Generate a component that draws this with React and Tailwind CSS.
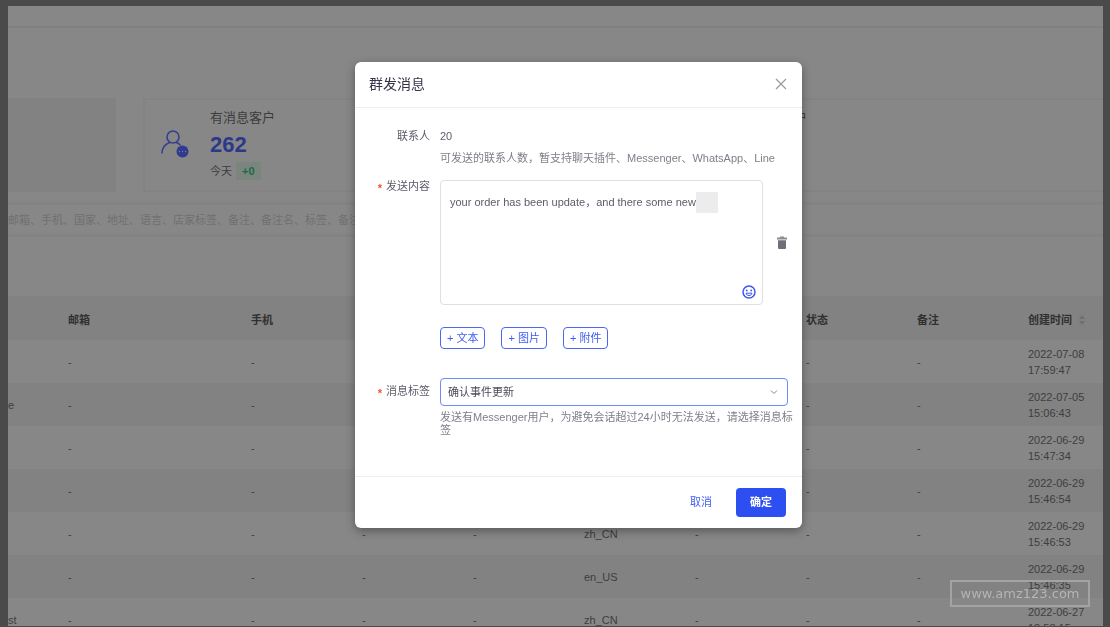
import React, { useState } from 'react';

const rows = [
  { id: 1, tail: '', lang: 'zh_CN', date: '2022-07-08', time: '17:59:47' },
  { id: 2, tail: 'e', lang: 'zh_CN', date: '2022-07-05', time: '15:06:43' },
  { id: 3, tail: '', lang: 'zh_CN', date: '2022-06-29', time: '15:47:34' },
  { id: 4, tail: '', lang: 'zh_CN', date: '2022-06-29', time: '15:46:54' },
  { id: 5, tail: '', lang: 'zh_CN', date: '2022-06-29', time: '15:46:53' },
  { id: 6, tail: '', lang: 'en_US', date: '2022-06-29', time: '15:46:35' },
  { id: 7, tail: 'st', lang: 'zh_CN', date: '2022-06-27', time: '18:58:15' },
];

const headers = ['邮箱', '手机', '国家', '地址', '语言', '标签', '状态', '备注'];

const CustomerIcon = () => (
  <svg width="28" height="28" viewBox="0 0 28 28" fill="none" className="shrink-0">
    <circle cx="12" cy="7" r="6" stroke="#363f8c" strokeWidth="1.6" />
    <path d="M1 23c0-5 3-8.500 7.500-10.500" stroke="#363f8c" strokeWidth="1.6" strokeLinecap="round" />
    <path d="M15.500 12.500c1.500.6 2.500 1.300 3.500 2.300" stroke="#363f8c" strokeWidth="1.6" strokeLinecap="round" />
    <circle cx="21.500" cy="21.500" r="6" fill="#303a8e" />
    <circle cx="18.500" cy="21.500" r="0.7" fill="#7a7fa0" />
    <circle cx="21.500" cy="21.500" r="0.7" fill="#7a7fa0" />
    <circle cx="24.500" cy="21.500" r="0.7" fill="#7a7fa0" />
  </svg>
);

const CloseIcon = () => (
  <svg width="12" height="12" viewBox="0 0 12 12" fill="none" stroke="#9a9a9e" strokeWidth="1.2">
    <path d="M1 1l10 10M11 1L1 11" />
  </svg>
);

const TrashIcon = () => (
  <svg width="12" height="14" viewBox="0 0 12 14" fill="#70707c">
    <path d="M4 0.500h4v1h3v2H1v-2h3z" fill="#8c8c96" />
    <path d="M2 4.300h8V12a1 1 0 0 1-1 1H3a1 1 0 0 1-1-1z" />
  </svg>
);

const SmileIcon = () => (
  <svg width="14" height="14" viewBox="0 0 14 14" fill="none" stroke="#3d55f5" strokeWidth="1.5">
    <circle cx="7" cy="7" r="6" />
    <path d="M4 8.200h6c-.4 1.600-1.500 2.300-3 2.300S4.400 9.800 4 8.200z" strokeWidth="1" />
    <circle cx="4.800" cy="5.500" r="0.900" fill="#3d55f5" stroke="none" />
    <circle cx="9.200" cy="5.500" r="0.900" fill="#3d55f5" stroke="none" />
  </svg>
);

const StatCard = ({ title, value, today }) => (
  <div className="w-[505px] shrink-0 h-[94px] flex items-center gap-[21px] pl-4 pb-0.5 border-2 border-[#838383]">
    <CustomerIcon />
    <div>
      <p className="text-[13px] leading-5 text-[#3c3c3c]">{title}</p>
      <p className="text-[22px] leading-[34px] font-bold text-[#2c3889]">{value}</p>
      <p className="flex items-center gap-1 text-[11px] leading-[18px] text-[#3c3c3c]">
        今天
        <span className="px-1.5 bg-[#7a857e] font-bold text-[#1a6a48]">{today}</span>
      </p>
    </div>
  </div>
);

const CustomerPage = () => (
  <main className="h-full overflow-hidden bg-[#878787] text-[11px] text-[#3e3e3e]">
    <div className="h-[22px] border-b-2 border-[#808080]" />

    {/* Stat cards */}
    <div className="flex gap-[27px] mt-[70px] overflow-hidden">
      <div className="w-[108px] shrink-0 bg-[#828282]" />
      <StatCard title="有消息客户" value="262" today="+0" />
      <StatCard title="无消息客户" value="0" today="+0" />
    </div>

    {/* Search */}
    <div className="mt-2.5 border-y-[3px] border-[#838383]">
      <input
        type="text"
        aria-label="搜索"
        placeholder="邮箱、手机、国家、地址、语言、店家标签、备注、备注名、标签、备注"
        className="block w-full h-[29px] bg-transparent outline-none placeholder:text-[#707070]"
      />
    </div>

    <table className="w-full mt-[59px] table-fixed text-left">
      <colgroup>
        <col className="w-[50px]" />
        <col className="w-[183px]" />
        {headers.slice(1).map((h) => (
          <col key={h} className="w-[111px]" />
        ))}
        <col />
      </colgroup>
      <thead>
        <tr className="h-11 bg-[#828282] text-[#303030]">
          <th />
          {headers.map((h) => (
            <th key={h} className="pl-2.5 pt-1 font-bold">{h}</th>
          ))}
          <th className="pl-2.5 pt-1 font-bold whitespace-nowrap">
            <button type="button" className="flex items-center gap-1.5">
              创建时间
              <svg width="8" height="10" viewBox="0 0 8 10" fill="#6f6f6f">
                <path d="M4 0l3 4H1zM4 10L1 6h6z" />
              </svg>
            </button>
          </th>
        </tr>
      </thead>
      <tbody>
        {rows.map((row) => (
          <tr key={row.id} className="h-[43px] leading-4 even:bg-[#828282]">
            <td>{row.tail}</td>
            <td className="pl-2.5">-</td>
            <td className="pl-2.5">-</td>
            <td className="pl-2.5">-</td>
            <td className="pl-2.5">-</td>
            <td className="pl-2.5">{row.lang}</td>
            <td className="pl-2.5">-</td>
            <td className="pl-2.5">-</td>
            <td className="pl-2.5">-</td>
            <td className="pl-2.5">
              {row.date}
              <br />
              {row.time}
            </td>
          </tr>
        ))}
      </tbody>
    </table>
  </main>
);

const Label = ({ htmlFor, required, children }) => (
  <label htmlFor={htmlFor} className="w-[61px] shrink-0 flex items-center justify-end gap-1 h-4 text-[#5c5c6b]">
    {required && <span className="text-[#f5502d] font-bold leading-none pt-1">*</span>}
    {children}
  </label>
);

const AddButton = ({ children }) => (
  <button
    type="button"
    className="h-[22px] px-1.5 whitespace-nowrap rounded-sm border border-[#4a67f5] text-[#3f5cf2]"
  >
    + {children}
  </button>
);

const MessageDialog = () => {
  const [content, setContent] = useState('your order has been update，and there some new');
  const [tag, setTag] = useState('event');

  return (
    <form
      role="dialog"
      aria-labelledby="dialog-title"
      onSubmit={(e) => e.preventDefault()}
      className="w-full max-w-[447px] rounded-md bg-white text-[11px] shadow-[0_3px_10px_rgba(0,0,0,0.35)]"
    >
      <header className="flex items-center justify-between h-[46px] pb-0.5 pl-3.5 pr-[15px] border-b border-[#ededf0]">
        <h2 id="dialog-title" className="text-sm text-[#34344a]">群发消息</h2>
        <button type="button" aria-label="关闭">
          <CloseIcon />
        </button>
      </header>

      <div className="px-3.5 pt-5 pb-[39px]">
        <div className="flex gap-2.5">
          <Label>联系人</Label>
          <div className="flex-1">
            <p className="leading-4 text-[#5c5c6b]">20</p>
            <p className="mt-1.5 leading-4 whitespace-nowrap text-[#7f7f8a]">
              可发送的联系人数，暂支持聊天插件、Messenger、WhatsApp、Line
            </p>
          </div>
        </div>

        <div className="flex gap-2.5 mt-3">
          <Label htmlFor="content" required>发送内容</Label>
          <div className="flex-1 pt-0.5">
            <div className="flex items-center gap-[13px]">
              <div className="relative flex-1">
                <textarea
                  id="content"
                  value={content}
                  onChange={(e) => setContent(e.target.value)}
                  className="block w-full h-[125px] px-[9px] py-[13px] leading-4 resize-none rounded-sm border border-[#dfdfe4] outline-none text-[#5c5c6b]"
                />
                <span className="absolute left-[256px] top-3 w-[22px] h-[21px] bg-[#ececec]" />
                <button type="button" aria-label="表情" className="absolute right-[7px] bottom-1.5">
                  <SmileIcon />
                </button>
              </div>
              <button type="button" aria-label="删除">
                <TrashIcon />
              </button>
            </div>
            <div className="flex gap-4 mt-[22px]">
              <AddButton>文本</AddButton>
              <AddButton>图片</AddButton>
              <AddButton>附件</AddButton>
            </div>
          </div>
        </div>

        <div className="flex gap-2.5 mt-[29px]">
          <div className="pt-[5px]">
            <Label htmlFor="tag" required>消息标签</Label>
          </div>
          <div className="flex-1">
            <div className="relative">
              <select
                id="tag"
                value={tag}
                onChange={(e) => setTag(e.target.value)}
                className="block w-full h-7 px-[7px] appearance-none rounded-sm border border-[#6f89f7] bg-white outline-none text-[#4c4c5a]"
              >
                <option value="event">确认事件更新</option>
              </select>
              <svg
                className="absolute right-2.5 top-2.5 pointer-events-none"
                width="8"
                height="8"
                viewBox="0 0 8 8"
                fill="none"
                stroke="#85858f"
              >
                <path d="M1 2.500l3 3 3-3" />
              </svg>
            </div>
            <p className="-mr-2 mt-[5px] leading-[13px] text-[#7f7f8a]">
              发送有Messenger用户，为避免会话超过24小时无法发送，请选择消息标签
            </p>
          </div>
        </div>
      </div>

      <footer className="flex justify-end items-center gap-3 h-[52px] pr-4 border-t border-[#ededf0]">
        <button type="button" className="h-[29px] px-3 text-[#3f5cf2]">取消</button>
        <button type="submit" className="h-[29px] px-3.5 rounded-sm bg-[#2d4ef0] font-bold text-white">
          确定
        </button>
      </footer>
    </form>
  );
};

const App = () => {
  return (
    <div className="relative h-screen overflow-hidden bg-[#4a4a4a] pt-1.5 pl-2 pr-[7px] pb-px font-['Liberation_Sans','Noto_Sans_CJK_SC',sans-serif]">
      <CustomerPage />

      {/* Dialog layer */}
      <div className="fixed inset-0 flex items-start justify-center pt-[62px] pl-[47px]">
        <MessageDialog />
      </div>

      {/* Watermark */}
      <div className="absolute right-5 bottom-5 w-[140px] h-[27px] flex items-center justify-center border-2 border-[#a3a3a3] text-[13px] text-[#b5b5b5] font-['DejaVu_Sans',sans-serif]">
        www.amz123.com
      </div>
    </div>
  );
};

export default App;
